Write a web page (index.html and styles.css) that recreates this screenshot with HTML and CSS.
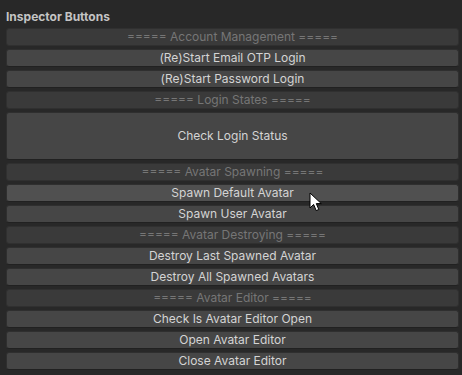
FILE: index.html
```html
<!DOCTYPE html>
<html lang="en">
<head>
  <meta charset="UTF-8" />
  <title>Inspector Buttons</title>
  <link rel="stylesheet" href="styles.css">
</head>
<body>
  <div class="inspector">
    <div class="title">Inspector Buttons</div>
    <div class="buttons">
      <div class="btn header">===== Account Management =====</div>
      <div class="btn">(Re)Start Email OTP Login</div>
      <div class="btn">(Re)Start Password Login</div>
      <div class="btn header">===== Login States =====</div>
      <div class="btn big">Check Login Status</div>
      <div class="btn header">===== Avatar Spawning =====</div>
      <div class="btn hover">Spawn Default Avatar
        <svg class="cursor" width="14" height="21" viewBox="0 0 14 21">
          <path d="M1 1 L1 16 L4.6 12.4 L7.2 18.6 L9.8 17.5 L7.3 11.6 L12.3 11.6 Z" fill="#fff" stroke="#000" stroke-width="1" stroke-linejoin="round"/>
        </svg>
      </div>
      <div class="btn">Spawn User Avatar</div>
      <div class="btn header">===== Avatar Destroying =====</div>
      <div class="btn">Destroy Last Spawned Avatar</div>
      <div class="btn">Destroy All Spawned Avatars</div>
      <div class="btn header">===== Avatar Editor =====</div>
      <div class="btn">Check Is Avatar Editor Open</div>
      <div class="btn">Open Avatar Editor</div>
      <div class="btn">Close Avatar Editor</div>
    </div>
  </div>
</body>
</html>
```

FILE: styles.css
```css
body {
  margin: 0;
  background-color: #282828;
  font-family: 'Inter', 'Liberation Sans', sans-serif;
  font-size: 12px;
  color: #d2d2d2;
}
.inspector {
  padding: 8px 3px 0 6px;
}
.title {
  font-weight: bold;
  color: #c4c4c4;
  line-height: 18px;
  height: 18px;
  margin-bottom: 2px;
}
.buttons {
  display: flex;
  flex-direction: column;
  gap: 3px;
}
.btn {
  position: relative;
  box-sizing: border-box;
  height: 18px;
  line-height: 16px;
  text-align: center;
  background-color: #464646;
  border: 1px solid #2f2f2f;
  border-bottom-color: #212121;
  border-radius: 3px;
  color: #d4d4d4;
}
.btn.header {
  background-color: #3a3a3a;
  border-color: #303030;
  color: #767676;
}
.btn.hover {
  background-color: #505050;
}
.btn.big {
  height: 48px;
  line-height: 46px;
}
.cursor {
  position: absolute;
  left: 302px;
  top: 7px;
  z-index: 1;
}
```
